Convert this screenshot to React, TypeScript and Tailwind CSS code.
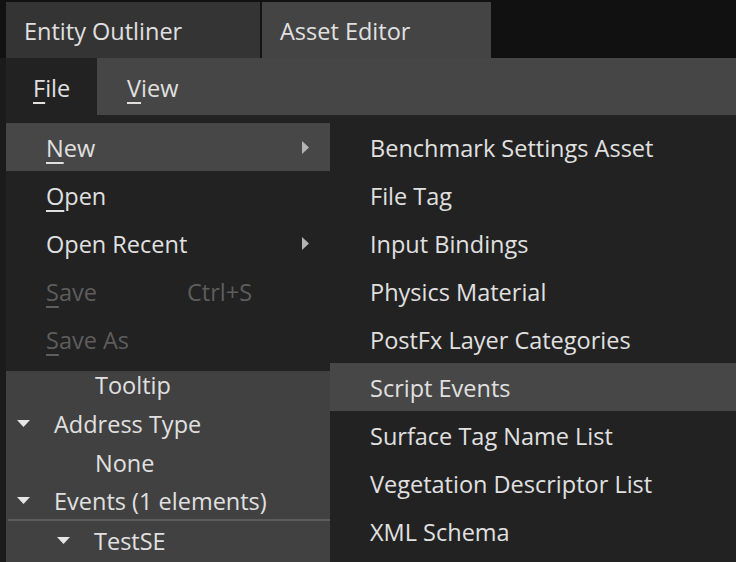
import type { ReactNode } from 'react';

const FONT = "font-['Open_Sans',_'DejaVu_Sans',_sans-serif]";

type MenuItem = {
  label: ReactNode;
  shortcut?: string;
  submenu?: boolean;
  disabled?: boolean;
  active?: boolean;
};

const FILE_MENU: MenuItem[] = [
  { label: <><u className="underline-offset-[5px]">N</u>ew</>, submenu: true, active: true },
  { label: <><u className="underline-offset-[5px]">O</u>pen</> },
  { label: 'Open Recent', submenu: true },
  { label: <><u className="underline-offset-[5px]">S</u>ave</>, shortcut: 'Ctrl+S', disabled: true },
  { label: <><u className="underline-offset-[5px]">S</u>ave As</>, disabled: true },
];

const NEW_MENU = [
  'Benchmark Settings Asset',
  'File Tag',
  'Input Bindings',
  'Physics Material',
  'PostFx Layer Categories',
  'Script Events',
  'Surface Tag Name List',
  'Vegetation Descriptor List',
  'XML Schema',
];

function DownTriangle() {
  return (
    <svg width="13" height="7" viewBox="0 0 13 7" className="shrink-0">
      <path d="M0 0 L13 0 L6.5 7 Z" fill="#e6e6e6" />
    </svg>
  );
}

function RightArrow() {
  return (
    <svg width="7" height="13" viewBox="0 0 7 13">
      <path d="M0 0 L7 6.5 L0 13 Z" fill="#b4b4b4" />
    </svg>
  );
}

function TreeRow({ depth, expandable, children, h = 'h-[39px]' }: { depth: number; expandable?: boolean; children: ReactNode; h?: string }) {
  const pad = depth === 0 ? 'pl-[11px]' : depth === 1 ? 'pl-[51px]' : 'pl-[89px]';
  return (
    <div className={`flex items-center ${h} ${pad}`}>
      {expandable ? (
        <span className="flex w-[37px] items-center">
          <DownTriangle />
        </span>
      ) : null}
      <span className="pt-[3px]">{children}</span>
    </div>
  );
}

export default function App() {
  return (
    <div className={`relative h-[562px] w-[736px] overflow-hidden whitespace-nowrap bg-[#1b1b1b] text-[23.5px] leading-none text-[#e0e0e0] ${FONT}`}>
      {/* tab strip */}
      <div className="flex h-[58px] bg-[#111111] pl-[6px] pt-[2px]">
        <div className="flex w-[256px] items-center border-r-2 border-[#141414] bg-[#343434] pl-[18px] pt-[4px]">
          Entity Outliner
        </div>
        <div className="flex w-[229px] items-center bg-[#444444] pl-[18px] pt-[4px]">Asset Editor</div>
      </div>

      <div className="ml-[6px] flex h-[504px] flex-col">
        {/* menu bar */}
        <div className="flex h-[57px] shrink-0 bg-[#464646]">
          <div className="flex w-[91px] items-center bg-[#222222] pl-[27px] pt-[4px]">
            <span><u className="underline-offset-[5px]">F</u>ile</span>
          </div>
          <div className="flex items-center pl-[30px] pt-[4px]">
            <span><u className="underline-offset-[5px]">V</u>iew</span>
          </div>
        </div>

        {/* property tree (mostly behind the menus) */}
        <div className="flex-1 bg-[#414141] pt-[250px]">
          <div className="w-[324px]">
            <TreeRow depth={2}>Tooltip</TreeRow>
            <TreeRow depth={0} expandable>Address Type</TreeRow>
            <TreeRow depth={2} h="h-[38px]">None</TreeRow>
            <TreeRow depth={0} expandable h="h-[38px]">Events (1 elements)</TreeRow>
            <div className="ml-[2px] h-[2px] bg-[#5c5c5c]" />
            <TreeRow depth={1} expandable h="h-[39px]">TestSE</TreeRow>
          </div>
        </div>
      </div>

      {/* File dropdown */}
      <div className="absolute left-[6px] top-[115px] w-[324px] bg-[#222222] py-[8px]">
        {FILE_MENU.map((item, i) => (
          <div
            key={i}
            className={`relative flex h-[48px] items-center pl-[40px] ${item.active ? 'bg-[#474747]' : ''} ${item.disabled ? 'text-[#5d5d5d]' : ''}`}
          >
            <span className="w-[141px] pt-[3px]">{item.label}</span>
            {item.shortcut ? <span className="pt-[3px]">{item.shortcut}</span> : null}
            {item.submenu ? (
              <span className="absolute left-[296px] top-[18px]">
                <RightArrow />
              </span>
            ) : null}
          </div>
        ))}
      </div>

      {/* New submenu */}
      <div className="absolute left-[330px] top-[115px] h-[447px] w-[406px] bg-[#222222] pt-[8px]">
        {NEW_MENU.map((label) => (
          <div
            key={label}
            className={`flex h-[48px] items-center pl-[40px] pt-[3px] ${label === 'Script Events' ? 'bg-[#474747]' : ''}`}
          >
            {label}
          </div>
        ))}
      </div>
    </div>
  );
}
